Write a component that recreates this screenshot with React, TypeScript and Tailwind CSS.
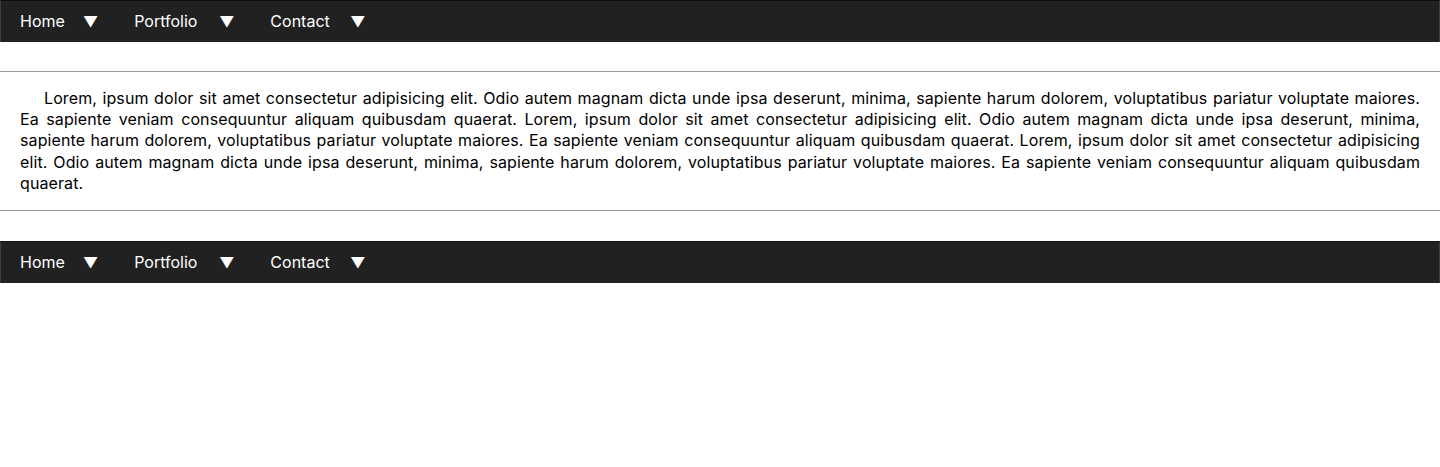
import React from "react";

const items: { label: string; w: string }[] = [
  { label: "Home", w: "w-[44px]" },
  { label: "Portfolio", w: "w-[66px]" },
  { label: "Contact", w: "w-[61px]" },
];

function Nav() {
  return (
    <nav className="h-[42px] bg-[#212121] border-t border-t-[#0e0e0e] border-x border-x-[#3d3d3d]">
      <ul className="flex h-full items-center pb-[1px] pl-[19px] gap-[36px] text-white text-[16px] leading-none">
        {items.map((it) => (
          <li key={it.label} className="flex items-center gap-[19px]">
            <span className={`${it.w} whitespace-nowrap`}>{it.label}</span>
            <span className="text-[15px]">▼</span>
          </li>
        ))}
      </ul>
    </nav>
  );
}

const lines = [
  "Lorem, ipsum dolor sit amet consectetur adipisicing elit. Odio autem magnam dicta unde ipsa deserunt, minima, sapiente harum dolorem, voluptatibus pariatur voluptate maiores.",
  "Ea sapiente veniam consequuntur aliquam quibusdam quaerat. Lorem, ipsum dolor sit amet consectetur adipisicing elit. Odio autem magnam dicta unde ipsa deserunt, minima,",
  "sapiente harum dolorem, voluptatibus pariatur voluptate maiores. Ea sapiente veniam consequuntur aliquam quibusdam quaerat. Lorem, ipsum dolor sit amet consectetur adipisicing",
  "elit. Odio autem magnam dicta unde ipsa deserunt, minima, sapiente harum dolorem, voluptatibus pariatur voluptate maiores. Ea sapiente veniam consequuntur aliquam quibusdam",
];

export default function App() {
  return (
    <div className="bg-white min-h-[467px] font-['Inter',sans-serif]">
      <Nav />
      <hr className="mt-[29px] border-t border-t-[#9a9a9a]" />
      <p className="mt-[16px] mb-[16px] px-5 text-[16px] leading-[21.2px] tracking-[0.1px] text-black text-justify">
        {lines.map((l, i) => (
          <span
            key={i}
            className={`block whitespace-nowrap [text-align-last:justify] ${i === 0 ? "pl-6" : ""}`}
          >
            {l}
          </span>
        ))}
        <span className="block">quaerat.</span>
      </p>
      <hr className="border-t border-t-[#9a9a9a]" />
      <div className="mt-[30px]">
        <Nav />
      </div>
    </div>
  );
}
